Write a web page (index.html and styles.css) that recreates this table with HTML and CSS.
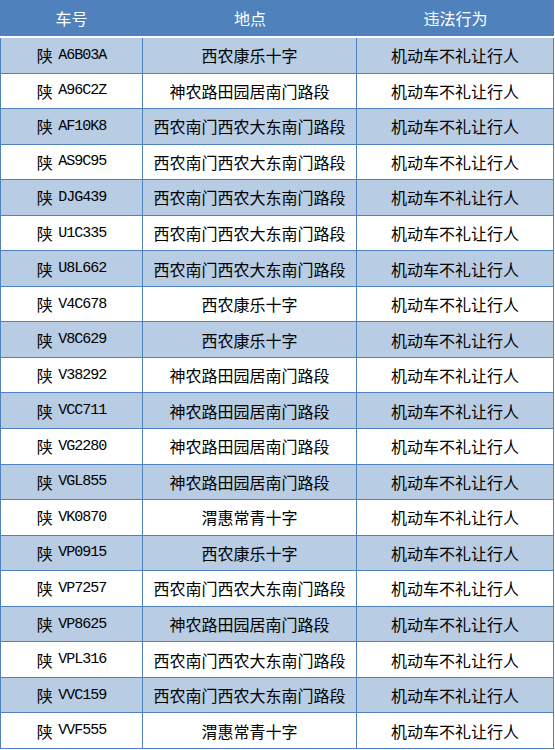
FILE: index.html
```html
<!DOCTYPE html>
<html lang="zh-CN">
<head>
<meta charset="utf-8">
<title>违法记录</title>
<link rel="stylesheet" href="styles.css">
</head>
<body>
<div class="table">
  <div class="head">
    <div class="hcell">车号</div>
    <div class="hcell">地点</div>
    <div class="hcell">违法行为</div>
  </div>
  <div class="body">
    <div class="row alt"><div class="cell">陕 <span class="plate">A6B03A</span></div><div class="cell">西农康乐十字</div><div class="cell">机动车不礼让行人</div></div>
    <div class="row"><div class="cell">陕 <span class="plate">A96C2Z</span></div><div class="cell">神农路田园居南门路段</div><div class="cell">机动车不礼让行人</div></div>
    <div class="row alt"><div class="cell">陕 <span class="plate">AF10K8</span></div><div class="cell">西农南门西农大东南门路段</div><div class="cell">机动车不礼让行人</div></div>
    <div class="row"><div class="cell">陕 <span class="plate">AS9C95</span></div><div class="cell">西农南门西农大东南门路段</div><div class="cell">机动车不礼让行人</div></div>
    <div class="row alt"><div class="cell">陕 <span class="plate">DJG439</span></div><div class="cell">西农南门西农大东南门路段</div><div class="cell">机动车不礼让行人</div></div>
    <div class="row"><div class="cell">陕 <span class="plate">U1C335</span></div><div class="cell">西农南门西农大东南门路段</div><div class="cell">机动车不礼让行人</div></div>
    <div class="row alt"><div class="cell">陕 <span class="plate">U8L662</span></div><div class="cell">西农南门西农大东南门路段</div><div class="cell">机动车不礼让行人</div></div>
    <div class="row"><div class="cell">陕 <span class="plate">V4C678</span></div><div class="cell">西农康乐十字</div><div class="cell">机动车不礼让行人</div></div>
    <div class="row alt"><div class="cell">陕 <span class="plate">V8C629</span></div><div class="cell">西农康乐十字</div><div class="cell">机动车不礼让行人</div></div>
    <div class="row"><div class="cell">陕 <span class="plate">V38292</span></div><div class="cell">神农路田园居南门路段</div><div class="cell">机动车不礼让行人</div></div>
    <div class="row alt"><div class="cell">陕 <span class="plate">VCC711</span></div><div class="cell">神农路田园居南门路段</div><div class="cell">机动车不礼让行人</div></div>
    <div class="row"><div class="cell">陕 <span class="plate">VG2280</span></div><div class="cell">神农路田园居南门路段</div><div class="cell">机动车不礼让行人</div></div>
    <div class="row alt"><div class="cell">陕 <span class="plate">VGL855</span></div><div class="cell">神农路田园居南门路段</div><div class="cell">机动车不礼让行人</div></div>
    <div class="row"><div class="cell">陕 <span class="plate">VK0870</span></div><div class="cell">渭惠常青十字</div><div class="cell">机动车不礼让行人</div></div>
    <div class="row alt"><div class="cell">陕 <span class="plate">VP0915</span></div><div class="cell">西农康乐十字</div><div class="cell">机动车不礼让行人</div></div>
    <div class="row"><div class="cell">陕 <span class="plate">VP7257</span></div><div class="cell">西农南门西农大东南门路段</div><div class="cell">机动车不礼让行人</div></div>
    <div class="row alt"><div class="cell">陕 <span class="plate">VP8625</span></div><div class="cell">神农路田园居南门路段</div><div class="cell">机动车不礼让行人</div></div>
    <div class="row"><div class="cell">陕 <span class="plate">VPL316</span></div><div class="cell">西农南门西农大东南门路段</div><div class="cell">机动车不礼让行人</div></div>
    <div class="row alt"><div class="cell">陕 <span class="plate">VVC159</span></div><div class="cell">西农南门西农大东南门路段</div><div class="cell">机动车不礼让行人</div></div>
    <div class="row"><div class="cell">陕 <span class="plate">VVF555</span></div><div class="cell">渭惠常青十字</div><div class="cell">机动车不礼让行人</div></div>
  </div>
</div>
</body>
</html>
```

FILE: styles.css
```css
* { box-sizing: border-box; }
html, body { margin: 0; padding: 0; background: #ffffff; }
body {
  font-family: "Noto Sans CJK SC", "Noto Sans", sans-serif;
  font-size: 16px;
  color: #000000;
}
.table {
  width: 554px;
}
.head {
  display: grid;
  grid-template-columns: 143px 214px 197px;
  height: 36px;
  background: #4f81bd;
  margin-bottom: 2px;
}
.hcell {
  display: flex;
  align-items: center;
  justify-content: center;
  color: #ffffff;
  font-size: 16px;
  line-height: 1;
  padding-bottom: 1px;
}
.body {
  border-left: 1px solid #4f81bd;
  border-right: 1px solid #4f81bd;
  display: grid;
  grid-auto-rows: 35.55px;
}
.row {
  display: grid;
  grid-template-columns: 142px 214px 196px;
  border-bottom: 1px solid #4f81bd;
  background: #ffffff;
}
.row.alt { background: #b8cce4; }
.cell {
  display: flex;
  align-items: center;
  justify-content: center;
  border-right: 1px solid #4f81bd;
  line-height: 1;
  white-space: pre;
}
.cell:last-child { border-right: none; }
.plate {
  font-family: "Liberation Mono", monospace;
  font-size: 15px;
  letter-spacing: -1px;
  margin-left: 2px;
}
```
